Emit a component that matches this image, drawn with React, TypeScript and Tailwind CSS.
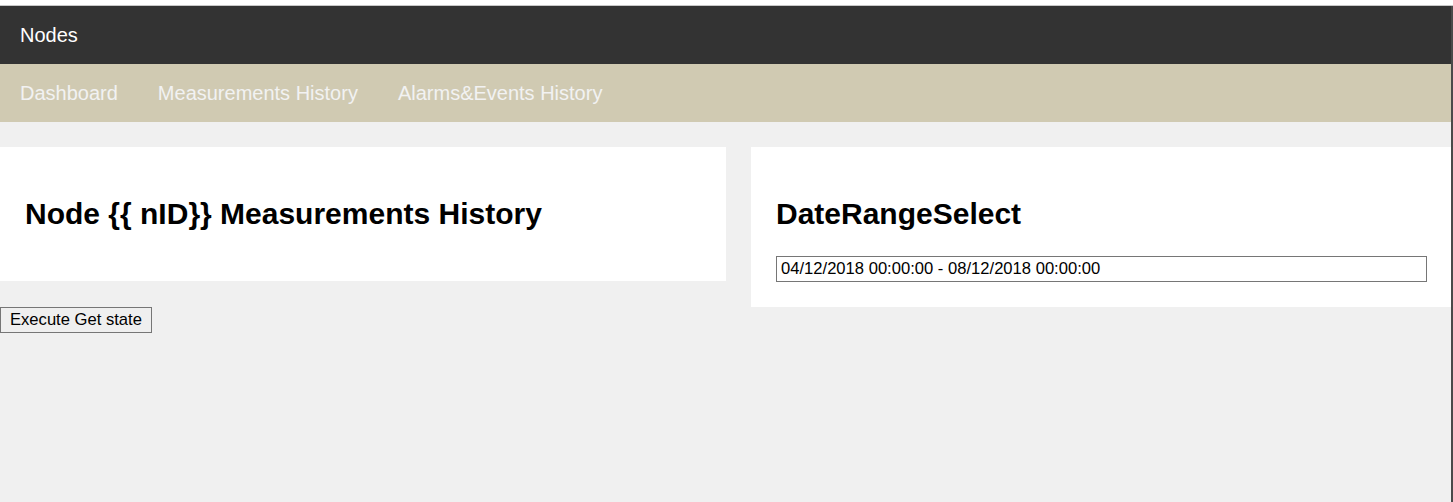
import * as React from "react";

export default function App() {
  return (
    <div className="min-h-[502px] w-[1453px] bg-white font-['Liberation_Sans',Arial,sans-serif] text-black">
      <div className="h-[5px] bg-white" />
      <div className="flex min-h-[497px] border-t border-[#c8c8c8]">
        <div className="flex w-[1451px] flex-col bg-[#f0f0f0]">
          <header className="flex h-[58px] items-center bg-[#333333] px-5 text-xl text-white">
            Nodes
          </header>
          <nav className="flex h-[58px] items-center bg-[#d0cab2] text-xl text-[#f2f2f2]">
            <a className="px-5">Dashboard</a>
            <a className="px-5">Measurements History</a>
            <a className="px-5">Alarms&amp;Events History</a>
          </nav>

          <div className="mt-[25px] flex gap-[25px]">
            <div className="flex w-[726px] shrink-0 flex-col">
              <div className="bg-white p-[25px]">
                <h1 className="my-[25px] text-[30px] font-bold leading-[34px]">
                  Node {"{{"} nID{"}}"} Measurements History
                </h1>
              </div>
              <div className="mt-[26px]">
                <button className="h-[26px] border border-[#767676] bg-[#efefef] px-[9px] text-[16.6px] leading-none">
                  Execute Get state
                </button>
              </div>
            </div>

            <div className="min-w-0 flex-1 self-start bg-white p-[25px]">
              <h1 className="my-[25px] text-[30px] font-bold leading-[34px]">DateRangeSelect</h1>
              <input
                readOnly
                value="04/12/2018 00:00:00 - 08/12/2018 00:00:00"
                className="block h-[26px] w-[651px] border border-[#767676] px-1 text-[16.6px] outline-none"
              />
            </div>
          </div>
        </div>
        <div className="w-[2px] bg-[#4a4a4a]" />
      </div>
    </div>
  );
}
